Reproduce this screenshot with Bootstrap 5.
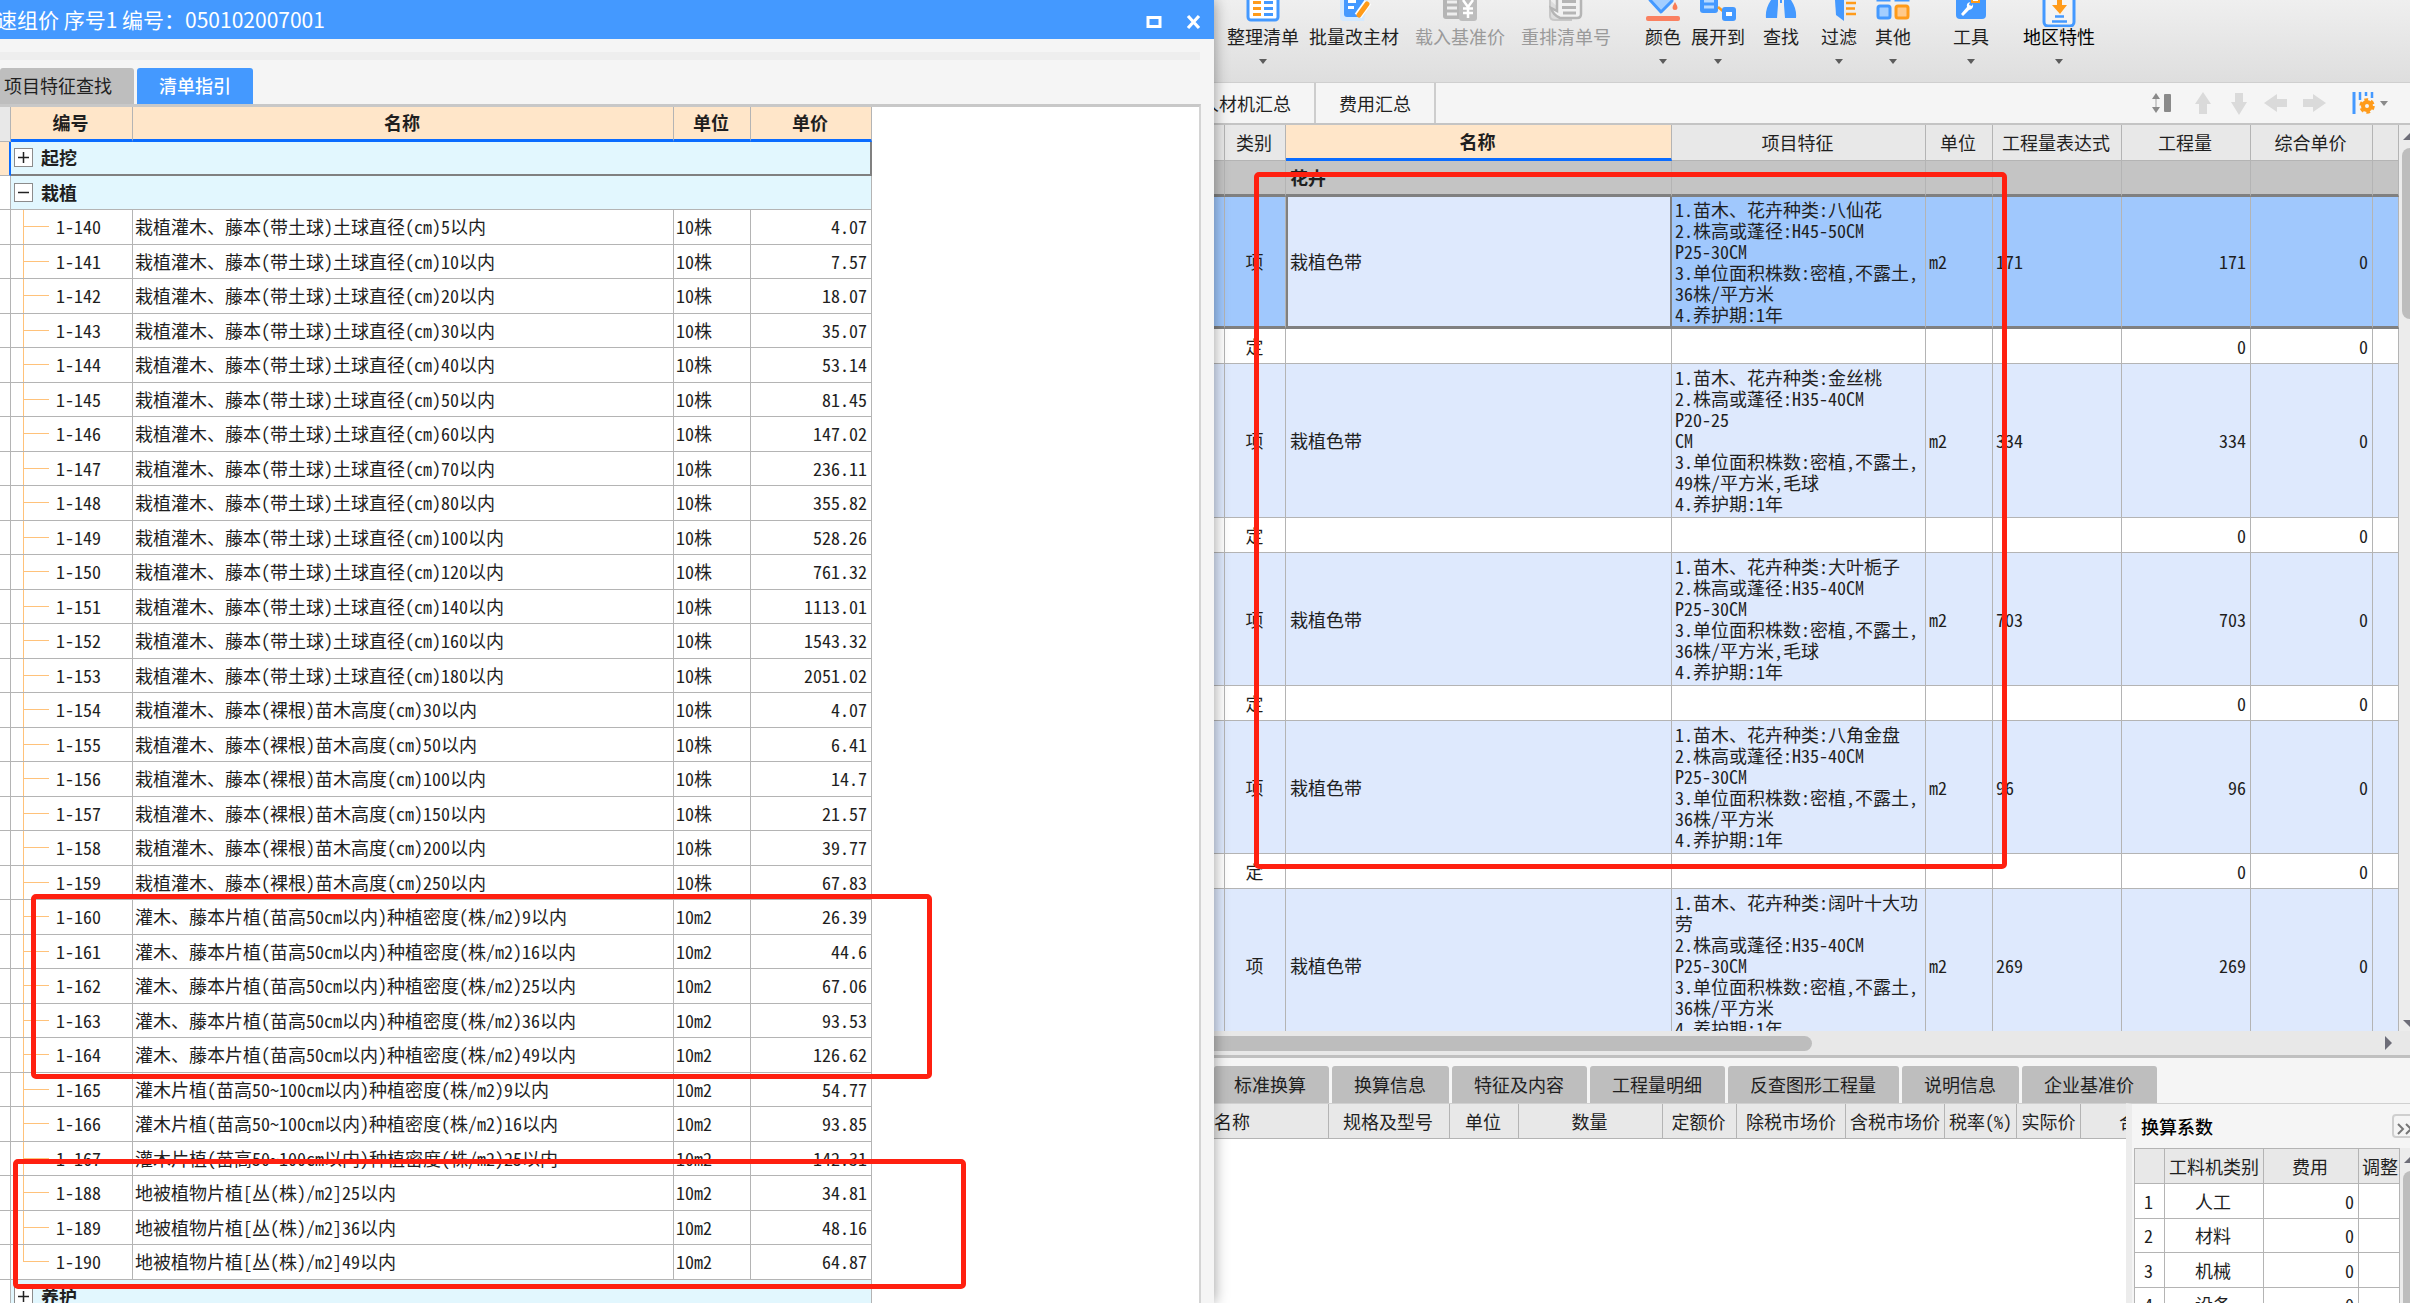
<!DOCTYPE html>
<html lang="zh-CN">
<head>
<meta charset="utf-8">
<meta name="viewport" content="width=device-width, initial-scale=1">
<title>组价</title>
<link href="https://cdn.jsdelivr.net/npm/bootstrap@5.3.0/dist/css/bootstrap.min.css" rel="stylesheet">
<style>
body{font-family:"Noto Sans CJK SC",sans-serif;font-size:18px;line-height:21px;color:#1f1f1f;background:#f5f5f5}
button{font:inherit;color:inherit;border:0;background:none;padding:0}
.app{height:100vh;position:relative}
/* dialog */
.dlg{flex:0 0 1214px;background:#f5f5f5;box-shadow:0 0 14px rgba(0,0,0,.4);z-index:2;overflow:hidden}
.dlg-title{height:39px;background:#4499ff;color:#fff;font-size:21px;line-height:36px;padding-right:12px}
.dlg-title span{margin-left:-4px;white-space:pre}
.dlg-band{height:8px;background:#eee;margin:13px 14px 8px 0}
.dlg-tabs{height:36px;gap:3px}
.dlg-tab{border-radius:3px 3px 0 0;background:#bebebe;height:36px;padding:0 22px 0 4px}
.dlg-tab.on{background:#4499ff;color:#fff;padding:0 22px;font-weight:500}
.dlg-body{background:#fff;border-top:3px solid #c8c8c8;border-right:2px solid #d4d4d4;margin-right:13px;overflow:hidden}
.grid{table-layout:fixed;border-collapse:separate;border-spacing:0}
.grid th,.grid td{border:0 solid #b4b4b4;border-width:0 1px 1px 0;padding:0 4px 0 2px;white-space:nowrap;overflow:hidden;height:35px}
.grid td,.hw{font-feature-settings:"hwid"}
.grid th{font-weight:400;text-align:center;background:#e8e8e8}
.quota{width:872px}
.quota thead th{background:#ffe6c9;font-weight:700;border-bottom:3px solid #0a6cff}
.quota thead th:first-child,.quota .gut{border-bottom:1px solid #b4b4b4;background:#e8e8e8}
.quota tbody tr:nth-child(even) td{height:34px}
.quota td.gut{background:#fff;padding:0}
.quota td.cat{background:#e2f7fe;font-weight:700;padding-left:3px}
.quota .cur td{height:34px}
.quota .cur .gut{background:#ffe6c9;border-right:2px solid #0a6cff}
.quota .cur .cat{border-right:2px solid #808080;border-bottom:2px solid #808080}
.quota .treeopen{background:linear-gradient(#ffc27a,#ffc27a) 12px 26px/1px 9px no-repeat #e2f7fe}
.quota .code{padding-left:45px;background:linear-gradient(#ffc27a,#ffc27a) 12px 0/1px 100% no-repeat,linear-gradient(#ffc27a,#ffc27a) 13px 50%/25px 1px no-repeat}
.quota .endcode{background-size:1px 50%,25px 1px}
.pm{width:19px;height:19px;border:1px solid #8c8c8c;background:#fff;margin-right:8px}
.pm svg{display:block}
/* main window */
.main{flex:1 1 0;min-width:0}
.ribbon{height:84px;background:linear-gradient(#efefef,#dedede);border-bottom:1px solid #cfcfcf;padding-left:13px}
.rb{height:70px}
.rb svg{display:block;height:27px}
.rb .lab{line-height:19px;white-space:nowrap}
.rb .arr{margin-top:13px}
.dis{color:#9a9a9a}
.arr{width:0;height:0;border:solid transparent;border-width:5px 4px 0;border-top-color:#5c5c5c}
.m10{margin-left:10px}.m16{margin-left:16px}.m18{margin-left:18px}.m22{margin-left:22px}.m34{margin-left:34px}.m36{margin-left:36px}.m42{margin-left:42px}
.vtabs{height:40px}
.vtab{height:40px;border-right:2px solid #cdcdcd;padding:0 23px}
.vtab-cut{width:102px;overflow:hidden;white-space:nowrap;display:flex;justify-content:flex-end;align-items:center}
.vtools{padding-right:20px}
.vtools svg{display:block}
.work{border-top:2px solid #c4c4c4;min-height:0;overflow:hidden;background:#fff}
.bill{width:100%}
.bill th{height:36px}
.bill th.act{background:#ffe6c9;font-weight:700;border-bottom:3px solid #0a6cff}
.bill .grp td{background:#c4c4c4;font-weight:700;border-bottom:3px solid #808080;height:36px}
.bill .item td{background:#dee9fd}
.bill .cur td{background:#a0c8fd;border-bottom:3px solid #808080;height:132px}
.bill .cur .nm{background:#dee9fd;border-right:2px solid #808080;border-left:2px solid #808080;padding-left:2px}
.h154 td{height:154px!important}.h133 td{height:133px!important}.h153 td{height:153px!important}
.bill .nm{padding-left:4px}
.bill td{padding-left:3px}
.vbar{flex:0 0 11px;background:#ececec;overflow:hidden}
.vthumb{width:16px;margin-left:3px;border-radius:8px;background:#bdbdbd}
.tri-u,.tri-d{width:0;height:0;border:6px solid transparent;margin-left:4px}
.tri-u{border-width:0 7px 7px;border-bottom-color:#6d6d78}
.tri-d{border-width:7px 7px 0;border-top-color:#6d6d78}
.tri-r{width:0;height:0;border:solid transparent;border-width:7px 0 7px 7px;border-left-color:#6d6d78;margin-right:18px}
.hbar{flex:0 0 24px;background:#e8e8e8}
.hthumb{height:15px;width:50%;border-radius:0 8px 8px 0;background:#bdbdbd}
.low{flex:0 0 248px;min-height:0;overflow:hidden;border-top:3px solid #c0c0c0}
.ltabs{flex:0 0 45px;gap:3px;padding-top:8px}
.ltab{background:#bebebe;border-radius:3px 3px 0 0;height:37px;padding:0 23px 0 22px;white-space:nowrap}
.ltab:first-child{padding-left:20px}
.lowgrid{min-width:0;overflow:hidden;background:#fff;border-top:1px solid #d0d0d0}
.lowgrid table{width:924px}
.side{flex:0 0 284px;border-left:6px solid #ececec;border-top:1px solid #d0d0d0;overflow:hidden}
.side-in{padding-left:2px}
.side-h{height:44px;padding-left:7px;font-weight:500;color:#000}
.more{width:28px;height:24px;border:2px solid #cfcfcf;border-radius:4px;margin-right:-10px}
.coef{width:266px;border-top:1px solid #b4b4b4;border-left:1px solid #b4b4b4}
.coef td{background:#fff;text-align:center}
.coef tr:nth-child(even) td{height:34px}
/* review marks drawn over the windows */
.redbox{position:absolute;border:5px solid #ff2010;border-radius:5px;z-index:5;pointer-events:none}
.rA{left:31px;top:894px;width:901px;height:185px}
.rB{left:13px;top:1159px;width:953px;height:130px}
.rC{left:1254px;top:172px;width:753px;height:697px}
</style>
<script src="https://cdn.jsdelivr.net/npm/bootstrap@5.3.0/dist/js/bootstrap.bundle.min.js"></script>
</head>
<body>
<div class="app d-flex overflow-hidden">
  <section class="dlg d-flex flex-column">
    <header class="dlg-title d-flex align-items-center justify-content-between">
      <span>速组价 序号1 编号：050102007001</span>
      <div class="d-flex align-items-center">
        <button aria-label="最大化"><svg width="46" height="24"><rect x="10" y="6.500" width="12" height="9" fill="none" stroke="#fff" stroke-width="3"/></svg></button>
        <button aria-label="关闭"><svg width="18" height="24"><path d="M4 5L15 17M15 5L4 17" stroke="#fff" stroke-width="3.200"/></svg></button>
      </div>
    </header>
    <div class="dlg-band"></div>
    <nav class="dlg-tabs d-flex">
      <button class="dlg-tab">项目特征查找</button>
      <button class="dlg-tab on">清单指引</button>
    </nav>
    <div class="dlg-body flex-grow-1">
      <table class="grid quota">
        <colgroup><col style="width:11px"><col style="width:122px"><col style="width:541px"><col style="width:77px"><col style="width:121px"></colgroup>
        <thead><tr><th></th><th>编号</th><th>名称</th><th>单位</th><th>单价</th></tr></thead>
        <tbody id="quota"></tbody>
      </table>
    </div>
  </section>

  <main class="main d-flex flex-column">
    <div class="ribbon d-flex">
      <button class="rb d-flex flex-column align-items-center">
        <svg width="36" height="27" viewBox="0 0 36 27"><rect x="3" y="-14" width="30" height="34" rx="3" fill="#fff" stroke="#4499ff" stroke-width="3"/><path d="M8 2.500h8M8 8.500h8M8 14.500h8" stroke="#ff9b1a" stroke-width="3"/><path d="M19 2.500h9M19 8.500h9M19 14.500h9" stroke="#4499ff" stroke-width="3"/></svg>
        <span class="lab">整理清单</span><i class="arr"></i></button>
      <button class="rb d-flex flex-column align-items-center m10">
        <svg width="36" height="27" viewBox="0 0 36 27"><path d="M4 0V17q0 4 4 4H28L32 0z" fill="#d3e9ff"/><path d="M8 0V14q0 3 3 3H25L30 0z" fill="#4499ff"/><path d="M12 1.500h8M12 7.500h6" stroke="#fff" stroke-width="3"/><path d="M22 16L32 2" stroke="#fff" stroke-width="8"/><path d="M23 15L31 4" stroke="#ff9b1a" stroke-width="5" stroke-linecap="round"/></svg>
        <span class="lab">批量改主材</span></button>
      <button class="rb d-flex flex-column align-items-center m16 dis" disabled>
        <svg width="36" height="27" viewBox="0 0 36 27"><path d="M1 0V16q0 3 3 3H18V0z" fill="#b5b5b5"/><path d="M5 2h10M5 8h10M5 14h10" stroke="#eee" stroke-width="3"/><rect x="17" y="-2" width="18" height="23" rx="3" fill="#bdbdbd"/><path d="M21 0l5 7l5-7M21 8.500h10M21 13h10M26 7v11" fill="none" stroke="#fff" stroke-width="2.500"/></svg>
        <span class="lab">载入基准价</span></button>
      <button class="rb d-flex flex-column align-items-center m16 dis" disabled>
        <svg width="36" height="27" viewBox="0 0 36 27"><path d="M2 0V16q0 4 5 4H24" fill="#ddd" stroke="#c8c8c8" stroke-width="2"/><path d="M9 -3H33V14q0 4-4 4H12Q5 15 3 8l6 3z" fill="#f2f2f2" stroke="#b5b5b5" stroke-width="2.500"/><path d="M14 1.500h14M14 7.500h14M15 13h13" stroke="#b5b5b5" stroke-width="3"/></svg>
        <span class="lab">重排清单号</span></button>
      <button class="rb d-flex flex-column align-items-center m34">
        <svg width="36" height="27" viewBox="0 0 36 27"><path d="M5 0L16 12L27 1V-5H5z" fill="#a3ceff" stroke="#4499ff" stroke-width="3" stroke-linejoin="round"/><path d="M30 2q5 8 0 8t0-8" fill="#fa7d55"/><rect x="1" y="16" width="34" height="5" rx="2" fill="#fa8060"/></svg>
        <span class="lab">颜色</span><i class="arr"></i></button>
      <button class="rb d-flex flex-column align-items-center m10">
        <svg width="36" height="27" viewBox="0 0 36 27"><rect y="-8" width="18" height="21" rx="3" fill="#4499ff"/><path d="M4 1h10M4 7h10" stroke="#b7d9ff" stroke-width="3"/><path d="M18 7l6 5" stroke="#ff9b1a" stroke-width="2.500"/><rect x="22" y="7" width="14" height="14" rx="3" fill="#4499ff"/><rect x="26" y="12" width="6" height="4" fill="#fff"/></svg>
        <span class="lab">展开到</span><i class="arr"></i></button>
      <button class="rb d-flex flex-column align-items-center m18">
        <svg width="36" height="27" viewBox="0 0 36 27"><path d="M8 0h7v5l-1 13H3Q2 9 8 0zM21 0h7q6 9 5 18H22L21 5z" fill="#4499ff"/><path d="M18 0v3" stroke="#4499ff" stroke-width="2"/></svg>
        <span class="lab">查找</span></button>
      <button class="rb d-flex flex-column align-items-center m22">
        <svg width="36" height="27" viewBox="0 0 36 27"><path d="M14 0h9V21l-8-6z" fill="#4499ff"/><path d="M25 3h10M25 8.500h9M25 14h10" stroke="#ff9b1a" stroke-width="2.500"/></svg>
        <span class="lab">过滤</span><i class="arr"></i></button>
      <button class="rb d-flex flex-column align-items-center m18">
        <svg width="36" height="27" viewBox="0 0 36 27"><rect x="3" y="-10" width="11" height="10" fill="#a3ceff" stroke="#4499ff" stroke-width="3"/><rect x="21" y="-10" width="12" height="10" fill="#a3ceff" stroke="#4499ff" stroke-width="3"/><rect x="3" y="6" width="12" height="12" rx="2" fill="#a3ceff" stroke="#4499ff" stroke-width="3"/><rect x="21" y="6" width="12" height="12" rx="2" fill="#ffc98a" stroke="#ff9b1a" stroke-width="3"/></svg>
        <span class="lab">其他</span><i class="arr"></i></button>
      <button class="rb d-flex flex-column align-items-center m42">
        <svg width="36" height="27" viewBox="0 0 36 27"><path d="M3 0H33V15q0 4-4 4H7q-4 0-4-4z" fill="#4499ff"/><path d="M19 0v2h7V0" fill="#fff" stroke="#ff9b1a" stroke-width="2"/><path d="M8 14l6-7q-1-4 3-5l-1 3 3 1 1-2q1 5-4 6l-6 6z" fill="#fff"/></svg>
        <span class="lab">工具</span><i class="arr"></i></button>
      <button class="rb d-flex flex-column align-items-center m34">
        <svg width="36" height="27" viewBox="0 0 36 27"><rect x="3" y="-12" width="30" height="38" rx="4" fill="#fff" fill-opacity=".4" stroke="#4499ff" stroke-width="3"/><path d="M16 0h5v5h5l-7 9l-8-9h5z" fill="#ff9b1a"/><path d="M14 16.500h9M11 21.500h15" stroke="#4499ff" stroke-width="2.500"/></svg>
        <span class="lab text-black">地区特性</span><i class="arr"></i></button>
    </div>
    <div class="vtabs d-flex align-items-center">
      <button class="vtab vtab-cut">人材机汇总</button>
      <button class="vtab">费用汇总</button>
      <div class="vtools ms-auto d-flex align-items-center gap-3">
        <svg width="27" height="24" viewBox="0 0 27 24"><path d="M1 8l4-6 4 6zM1 16l4 6 4-6z" fill="#8a8a8a"/><path d="M5 8v8" stroke="#ccc" stroke-width="2"/><rect x="13" y="3" width="7" height="18" rx="1" fill="#8a8a8a"/></svg>
        <svg width="18" height="24" viewBox="0 0 18 24"><path d="M9 1l8 12h-4v10H5V13H1z" fill="#dadada"/></svg>
        <svg width="20" height="24" viewBox="0 0 20 24"><path d="M11 24l8-13h-4V2H7v9H3z" fill="#dadada"/></svg>
        <svg width="23" height="24" viewBox="0 0 23 24"><path d="M0 12L13 3v5h10v8H13v5z" fill="#dadada"/></svg>
        <svg width="23" height="24" viewBox="0 0 23 24"><path d="M23 12L10 3v5H0v8h10v5z" fill="#dadada"/></svg>
        <svg width="48" height="24" viewBox="0 0 48 24"><path d="M12 1v22" stroke="#4499ff" stroke-width="3"/><path d="M18 1v8M24 1v4M30 1v6" stroke="#4499ff" stroke-width="2.500"/><circle cx="25" cy="15" r="4" fill="none" stroke="#ff9b1a" stroke-width="4"/><circle cx="25" cy="15" r="6.500" fill="none" stroke="#ff9b1a" stroke-width="2.500" stroke-dasharray="3.800 3"/><path d="M38 10h8l-4 5z" fill="#8a8a8a"/></svg>
      </div>
    </div>
    <div class="work d-flex flex-grow-1">
      <div class="flex-grow-1 overflow-hidden">
        <table class="grid bill">
          <colgroup><col style="width:11px"><col style="width:61px"><col><col style="width:254px"><col style="width:67px"><col style="width:129px"><col style="width:129px"><col style="width:122px"><col style="width:26px"></colgroup>
          <thead><tr><th></th><th>类别</th><th class="act">名称</th><th>项目特征</th><th>单位</th><th>工程量表达式</th><th>工程量</th><th>综合单价</th><th></th></tr></thead>
          <tbody id="bill"></tbody>
        </table>
      </div>
      <div class="vbar d-flex flex-column justify-content-between">
        <div><div class="tri-u mt-2 mb-2"></div><div class="vthumb" style="height:171px"></div></div>
        <div class="tri-d mb-1"></div>
      </div>
    </div>
    <div class="hbar d-flex align-items-center justify-content-between"><div class="hthumb"></div><div class="tri-r"></div></div>
    <section class="low d-flex flex-column">
      <nav class="ltabs d-flex">
        <button class="ltab">标准换算</button><button class="ltab">换算信息</button><button class="ltab">特征及内容</button><button class="ltab">工程量明细</button><button class="ltab">反查图形工程量</button><button class="ltab">说明信息</button><button class="ltab">企业基准价</button>
      </nav>
      <div class="d-flex flex-grow-1 overflow-hidden">
        <div class="lowgrid flex-grow-1">
          <table class="grid hw">
            <colgroup><col style="width:115px"><col style="width:121px"><col style="width:69px"><col style="width:144px"><col style="width:74px"><col style="width:109px"><col style="width:99px"><col style="width:72px"><col style="width:64px"><col style="width:57px"></colgroup>
            <thead><tr><th class="text-start ps-0">名称</th><th>规格及型号</th><th>单位</th><th>数量</th><th>定额价</th><th class="px-0">除税市场价</th><th class="px-0">含税市场价</th><th class="px-0">税率(%)</th><th class="px-0">实际价</th><th class="text-end pe-0">合</th></tr></thead>
          </table>
        </div>
        <aside class="side"><div class="side-in">
          <div class="side-h d-flex align-items-center justify-content-between"><span>换算系数</span>
            <button class="more" aria-label="展开"><svg width="20" height="16" viewBox="0 0 20 16"><path d="M2 3l5 5-5 5M10 3l5 5-5 5" fill="none" stroke="#777" stroke-width="2"/></svg></button></div>
          <div class="d-flex">
            <table class="grid coef">
              <colgroup><col style="width:30px"><col style="width:99px"><col style="width:95px"><col style="width:41px"></colgroup>
              <thead><tr><th></th><th class="px-0">工料机类别</th><th>费用</th><th class="pe-0">调整</th></tr></thead>
              <tbody>
                <tr><td>1</td><td>人工</td><td class="text-end">0</td><td></td></tr>
                <tr><td>2</td><td>材料</td><td class="text-end">0</td><td></td></tr>
                <tr><td>3</td><td>机械</td><td class="text-end">0</td><td></td></tr>
                <tr><td>4</td><td>设备</td><td class="text-end">0</td><td></td></tr>
              </tbody>
            </table>
            <div class="vbar"><div class="tri-u mt-2 mb-2"></div><div class="vthumb h-100"></div></div>
          </div>
        </div></aside>
      </div>
    </section>
  </main>
  <div class="redbox rA"></div><div class="redbox rB"></div><div class="redbox rC"></div>
</div>
<script>
const P = '<svg width="17" height="17"><path d="M3 8.500h11M8.500 3v11" stroke="#222" stroke-width="1.500"/></svg>';
const M = '<svg width="17" height="17"><path d="M3 8.500h11" stroke="#222" stroke-width="1.500"/></svg>';
const cat = (t, open, cls, extra) => `<tr class="${cls}"><td class="gut"></td><td class="cat ${extra}" colspan="4"><div class="d-flex align-items-center"><button class="pm" aria-label="${t}">${open ? M : P}</button>${t}</div></td></tr>`;
const rows = [];
[[5,'4.07'],[10,'7.57'],[20,'18.07'],[30,'35.07'],[40,'53.14'],[50,'81.45'],[60,'147.02'],[70,'236.11'],[80,'355.82'],[100,'528.26'],[120,'761.32'],[140,'1113.01'],[160,'1543.32'],[180,'2051.02']].forEach(r => rows.push([`栽植灌木、藤本(带土球)土球直径(cm)${r[0]}以内`, '10株', r[1]]));
[[30,'4.07'],[50,'6.41'],[100,'14.7'],[150,'21.57'],[200,'39.77'],[250,'67.83']].forEach(r => rows.push([`栽植灌木、藤本(裸根)苗木高度(cm)${r[0]}以内`, '10株', r[1]]));
[[9,'26.39'],[16,'44.6'],[25,'67.06'],[36,'93.53'],[49,'126.62']].forEach(r => rows.push([`灌木、藤本片植(苗高50cm以内)种植密度(株/m2)${r[0]}以内`, '10m2', r[1]]));
[[9,'54.77'],[16,'93.85'],[25,'142.31']].forEach(r => rows.push([`灌木片植(苗高50~100cm以内)种植密度(株/m2)${r[0]}以内`, '10m2', r[1]]));
[[25,'34.81'],[36,'48.16'],[49,'64.87']].forEach(r => rows.push([`地被植物片植[丛(株)/m2]${r[0]}以内`, '10m2', r[1]]));
let h = cat('起挖', false, 'cur', '') + cat('栽植', true, '', 'treeopen');
rows.forEach((r, i) => {
  const n = i < 28 ? 140 + i : 160 + i;
  h += `<tr><td class="gut"></td><td class="code ${i === 30 ? 'endcode' : ''}">1-${n}</td><td>${r[0]}</td><td>${r[1]}</td><td class="text-end">${r[2]}</td></tr>`;
});
h += cat('养护', false, '', '');
document.getElementById('quota').innerHTML = h;

const items = [
 ['cur', 171, ['1.苗木、花卉种类:八仙花','2.株高或蓬径:H45-50CM','P25-30CM','3.单位面积株数:密植,不露土,','36株/平方米','4.养护期:1年']],
 ['h154', 334, ['1.苗木、花卉种类:金丝桃','2.株高或蓬径:H35-40CM','P20-25','CM','3.单位面积株数:密植,不露土,','49株/平方米,毛球','4.养护期:1年']],
 ['h133', 703, ['1.苗木、花卉种类:大叶栀子','2.株高或蓬径:H35-40CM','P25-30CM','3.单位面积株数:密植,不露土,','36株/平方米,毛球','4.养护期:1年']],
 ['h133', 96, ['1.苗木、花卉种类:八角金盘','2.株高或蓬径:H35-40CM','P25-30CM','3.单位面积株数:密植,不露土,','36株/平方米','4.养护期:1年']],
 ['h153', 269, ['1.苗木、花卉种类:阔叶十大功','劳','2.株高或蓬径:H35-40CM','P25-30CM','3.单位面积株数:密植,不露土,','36株/平方米','4.养护期:1年']]
];
let b = '<tr class="grp"><td></td><td></td><td class="nm">花卉</td><td></td><td></td><td></td><td></td><td></td><td></td></tr>';
items.forEach((it, i) => {
  b += `<tr class="item ${it[0]}"><td></td><td class="text-center">项</td><td class="nm">栽植色带</td><td>${it[2].join('<br>')}</td><td>m2</td><td>${it[1]}</td><td class="text-end">${it[1]}</td><td class="text-end">0</td><td></td></tr>`;
  if (i < 4) b += '<tr><td></td><td class="text-center">定</td><td></td><td></td><td></td><td></td><td class="text-end">0</td><td class="text-end">0</td><td></td></tr>';
});
document.getElementById('bill').innerHTML = b;
</script>
</body>
</html>
